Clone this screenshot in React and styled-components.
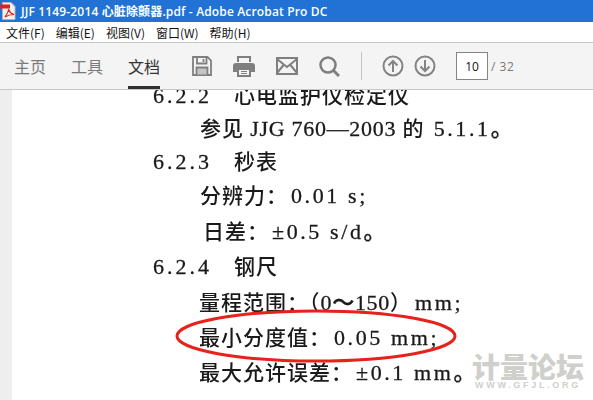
import React from 'react';
import styled, { createGlobalStyle } from 'styled-components';

const GlobalStyle = createGlobalStyle`
  html, body {
    margin: 0;
    padding: 0;
    background: #ffffff;
  }
`;

function App() {
  return (
    <Window>
      <GlobalStyle />
      <TitleBar>
        <PdfIcon width="16" height="18" viewBox="0 0 16 18">
          <path d="M2.500 .5H11L15 4.500V17.500H2.500Z" fill="#f4f1ec" stroke="#b9b4ac" />
          <path d="M0 2.500H10V6.500H0Z" fill="#d9241c" />
          <path d="M5 15C7 12 9 9 8.500 7C10 11 11.500 12 14 12.500C11 12.500 8 13 5 15Z" fill="none" stroke="#d9241c" strokeWidth="1.200" />
        </PdfIcon>
        <TitleText>JJF 1149-2014 心脏除颤器.pdf - Adobe Acrobat Pro DC</TitleText>
      </TitleBar>
      <MenuBar>
        <MenuItem>文件(F)</MenuItem>
        <MenuItem>编辑(E)</MenuItem>
        <MenuItem>视图(V)</MenuItem>
        <MenuItem>窗口(W)</MenuItem>
        <MenuItem>帮助(H)</MenuItem>
      </MenuBar>
      <Toolbar>
        <Tab>主页</Tab>
        <Tab>工具</Tab>
        <Tab active>文档</Tab>
        <Icons>
          <svg width="20" height="20" viewBox="0 0 20 20" fill="none" stroke="#7f7f7f" strokeWidth="1.800">
            <path d="M1 1H15.500L19 4.500V19H1Z" />
            <path d="M5 1.500V7.500H14.500V1.500" />
            <path d="M11.500 3V6" />
            <path d="M4.500 18.500V11.500H15.500V18.500" fill="#c4c4c4" />
          </svg>
          <svg width="22" height="21" viewBox="0 0 22 21" fill="#7f7f7f">
            <path d="M4 0H18V6H4Z" />
            <path d="M6 2H16V6H6Z" fill="#f4f4f4" />
            <path d="M3 7H19Q22 7 22 10V16H18V12H4V16H0V10Q0 7 3 7Z" />
            <path d="M4 12H18V21H4Z" />
            <path d="M6 14H16V19H6Z" fill="#f4f4f4" />
            <path d="M8 15.500H14M8 17.500H14" stroke="#7f7f7f" />
          </svg>
          <svg width="22" height="18" viewBox="0 0 22 18" fill="none" stroke="#7f7f7f" strokeWidth="2">
            <path d="M1 1H21V17H1Z" />
            <path d="M1 2L11 10L21 2" />
            <path d="M1 16L8 7.500M21 16L14 7.500" />
          </svg>
          <svg width="21" height="21" viewBox="0 0 21 21" fill="none" stroke="#7f7f7f">
            <circle cx="9" cy="9" r="7.500" strokeWidth="2.500" />
            <path d="M14.500 14.500L20 20" strokeWidth="3" />
          </svg>
        </Icons>
        <Divider />
        <PageNav>
          <NavIcon viewBox="0 0 22 22">
            <circle cx="11" cy="11" r="9.500" />
            <path d="M11 17V6M6.500 10.500L11 6L15.500 10.500" />
          </NavIcon>
          <NavIcon viewBox="0 0 22 22">
            <circle cx="11" cy="11" r="9.500" />
            <path d="M11 5V16M6.500 11.500L11 16L15.500 11.500" />
          </NavIcon>
        </PageNav>
        <PageBox>10</PageBox>
        <PageTotal>/ 32</PageTotal>
      </Toolbar>
      <Viewer>
        <Gutter />
        <PageText>
          <Line $height={33}>
            <SectionNum>6.2.2</SectionNum>心电监护仪检定仪
          </Line>
          <Line $height={33} $indent={47}>
            参见 <Latin>JJG 760—2003</Latin> 的 <Latin $wide>5.1.1。</Latin>
          </Line>
          <Line $height={33}>
            <SectionNum>6.2.3</SectionNum>秒表
          </Line>
          <Line $height={36} $indent={47}>
            分辨力：<Latin $wide>0.01 s;</Latin>
          </Line>
          <Line $height={35} $indent={50}>
            日差：<Latin $wide>±0.5 s/d。</Latin>
          </Line>
          <Line $height={36}>
            <SectionNum>6.2.4</SectionNum>钢尺
          </Line>
          <Line $height={35} $indent={46}>
            量程范围：（<Latin>0～150</Latin>）<Latin $wide>mm;</Latin>
          </Line>
          <Line $height={35} $indent={46}>
            最小分度值：<Latin $wide>0.05 mm;</Latin>
          </Line>
          <Line $height={35} $indent={46}>
            最大允许误差：<Latin $wide>±0.1 mm。</Latin>
          </Line>
        </PageText>
        <Ellipse width="286" height="60" viewBox="0 0 286 60">
          <ellipse cx="144" cy="30" rx="139" ry="25" />
        </Ellipse>
        <Watermark>
          <WatermarkTitle>计量论坛</WatermarkTitle>
          <WatermarkUrl>WWW.GFJL.ORG</WatermarkUrl>
        </Watermark>
      </Viewer>
    </Window>
  );
}

export default App;

// Styled Components

const Window = styled.div`
  width: 593px;
  height: 400px;
  display: flex;
  flex-direction: column;
  overflow: hidden;
  background: #ffffff;
  font-family: "Noto Sans CJK SC", "Liberation Sans", sans-serif;
`;

const TitleBar = styled.div`
  height: 22px;
  display: flex;
  align-items: center;
  gap: 5px;
  background: #2272d6;
  color: #ffffff;
  flex-shrink: 0;
`;

const PdfIcon = styled.svg`
  flex-shrink: 0;
`;

const TitleText = styled.span`
  font-family: "Open Sans", "Noto Sans CJK SC", sans-serif;
  font-size: 12px;
  font-weight: 600;
  letter-spacing: 0.15px;
  white-space: nowrap;
`;

const MenuBar = styled.div`
  height: 20px;
  display: flex;
  align-items: center;
  gap: 11px;
  padding-left: 6px;
  background: #ffffff;
  border-bottom: 1px solid #c8c8c8;
  flex-shrink: 0;
`;

const MenuItem = styled.span`
  font-size: 12px;
  color: #111111;
  white-space: nowrap;
`;

const Toolbar = styled.div`
  height: 46px;
  display: flex;
  align-items: center;
  padding-left: 14px;
  background: #f4f4f4;
  border-bottom: 1px solid #c8c8c8;
  flex-shrink: 0;
`;

const Tab = styled.div`
  height: 46px;
  box-sizing: border-box;
  display: flex;
  align-items: center;
  margin-right: 25px;
  padding-top: 2px;
  font-size: 16px;
  color: ${(props) => (props.active ? '#333333' : '#7a7a7a')};
  border-bottom: 3px solid ${(props) => (props.active ? '#2f2f2f' : 'transparent')};
  white-space: nowrap;
`;

const Icons = styled.div`
  display: flex;
  align-items: center;
  gap: 21px;
  margin-left: 7px;
`;

const Divider = styled.div`
  width: 1px;
  height: 28px;
  margin: 0 20px 0 21px;
  background: #c4c4c4;
`;

const PageNav = styled.div`
  display: flex;
  align-items: center;
  gap: 10px;
`;

const NavIcon = styled.svg`
  width: 22px;
  height: 22px;
  fill: none;
  stroke: #848484;
  stroke-width: 2;
`;

const PageBox = styled.div`
  width: 32px;
  height: 28px;
  box-sizing: border-box;
  display: flex;
  align-items: center;
  justify-content: center;
  margin-left: 20px;
  background: #ffffff;
  border: 1px solid #848484;
  font-family: "Open Sans", sans-serif;
  font-size: 12px;
  color: #111111;
`;

const PageTotal = styled.span`
  margin-left: 3px;
  font-family: "Open Sans", sans-serif;
  font-size: 12px;
  letter-spacing: 0.5px;
  color: #7a7a7a;
`;

const Viewer = styled.div`
  position: relative;
  flex: 1;
  display: flex;
  overflow: hidden;
  background: #ffffff;
`;

const Gutter = styled.div`
  width: 12px;
  background: #eeeeee;
  flex-shrink: 0;
`;

const PageText = styled.div`
  margin-top: -11px;
  padding-left: 141px;
  color: #1a1a1a;
`;

const Line = styled.div`
  height: ${(props) => props.$height}px;
  line-height: ${(props) => props.$height}px;
  padding-left: ${(props) => props.$indent || 0}px;
  font-family: "Liberation Serif", "Noto Sans CJK SC", serif;
  font-size: 21px;
  font-weight: 500;
  letter-spacing: 1px;
  white-space: nowrap;
  filter: blur(0.4px);
`;

const Latin = styled.span`
  font-size: 22px;
  margin-left: ${(props) => (props.$wide ? 3 : 0)}px;
  letter-spacing: ${(props) => (props.$wide ? 2.6 : 0.7)}px;
  -webkit-text-stroke: 0.3px #1a1a1a;
`;

const SectionNum = styled.span`
  display: inline-block;
  width: 81px;
  font-size: 22px;
  letter-spacing: 3px;
  -webkit-text-stroke: 0.3px #1a1a1a;
`;

const Ellipse = styled.svg`
  position: absolute;
  left: 172px;
  top: 216px;
  fill: none;
  stroke: #e8211c;
  stroke-width: 3;
`;

const Watermark = styled.div`
  position: absolute;
  right: 9px;
  bottom: 11px;
  display: flex;
  flex-direction: column;
  align-items: center;
  color: #cfcfcc;
`;

const WatermarkTitle = styled.div`
  font-size: 28px;
  font-weight: 900;
  line-height: 24px;
`;

const WatermarkUrl = styled.div`
  margin-top: 3px;
  font-family: "Liberation Sans", sans-serif;
  font-size: 9px;
  font-weight: 700;
  line-height: 8px;
  letter-spacing: 2.7px;
`;
